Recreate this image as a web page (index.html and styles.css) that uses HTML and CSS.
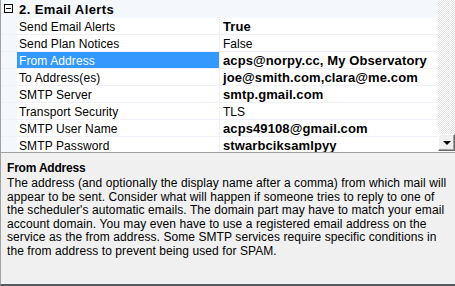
FILE: index.html
```html
<!DOCTYPE html>
<html>
<head>
<meta charset="utf-8">
<link rel="stylesheet" href="styles.css">
</head>
<body>
<div class="app">
  <div class="grid">
    <div class="rows">
      <div class="cat">
        <div class="margin"><span class="expander"><span class="minus"></span></span></div>
        <div class="cat-label">2. Email Alerts</div>
      </div>
      <div class="row"><div class="margin"></div><div class="name">Send Email Alerts</div><div class="val bold">True</div></div>
      <div class="row"><div class="margin"></div><div class="name">Send Plan Notices</div><div class="val">False</div></div>
      <div class="row sel"><div class="margin"></div><div class="name">From Address</div><div class="val bold">acps@norpy.cc, My Observatory</div></div>
      <div class="row"><div class="margin"></div><div class="name">To Address(es)</div><div class="val bold">joe@smith.com,clara@me.com</div></div>
      <div class="row"><div class="margin"></div><div class="name">SMTP Server</div><div class="val bold">smtp.gmail.com</div></div>
      <div class="row"><div class="margin"></div><div class="name">Transport Security</div><div class="val">TLS</div></div>
      <div class="row"><div class="margin"></div><div class="name">SMTP User Name</div><div class="val bold">acps49108@gmail.com</div></div>
      <div class="row"><div class="margin"></div><div class="name">SMTP Password</div><div class="val bold">stwarbciksamlpyy</div></div>
    </div>
    <div class="scroll">
      <div class="track"></div>
      <div class="btn"><span class="arrow"></span></div>
    </div>
  </div>
  <div class="desc">
    <div class="desc-title">From Address</div>
    <div class="desc-text">The address (and optionally the display name after a comma) from which mail will<br>appear to be sent. Consider what will happen if someone tries to reply to one of<br>the scheduler's automatic emails. The domain part may have to match your email<br>account domain. You may even have to use a registered email address on the<br>service as the from address. Some SMTP services require specific conditions in<br>the from address to prevent being used for SPAM.</div>
  </div>
</div>
</body>
</html>
```
FILE: styles.css
```css
html, body { margin: 0; padding: 0; }
body {
  width: 455px; height: 286px; overflow: hidden;
  font-family: "Liberation Sans", Arial, sans-serif;
  font-size: 12px; color: #000; background: #f0f0f0;
}
.app { display: flex; flex-direction: column; height: 286px; }
.grid {
  height: 153px; display: flex; background: #fff;
  border-bottom: 1px solid #a0a0a0; box-sizing: border-box;
  flex: none;
}
.rows { width: 438px; overflow: hidden; border-left: 1px solid #a0a0a0; box-sizing: border-box; }
.cat {
  height: 17px; display: flex; background: #f4f7fc;
  border-bottom: 1px solid #f4f7fc;
}
.margin { width: 16px; flex: none; background: #f4f7fc; position: relative; }
.expander {
  position: absolute; left: 3px; top: 4px; width: 9px; height: 9px;
  box-sizing: border-box; border: 1px solid #000; background: #fff;
}
.minus { position: absolute; left: 1px; top: 3px; width: 5px; height: 1px; background: #000; }
.cat-label { font-weight: bold; font-size: 13px; letter-spacing: 0.4px; line-height: 17px; padding-left: 2px; padding-top: 1px; }
.row { height: 16px; display: flex; border-bottom: 1px solid #f0f0fa; }
.name {
  width: 203px; flex: none; line-height: 16px; padding: 1px 0 0 2px; box-sizing: border-box;
  border-right: 1px solid #f0f0fa; white-space: nowrap; color: #000; letter-spacing: 0.1px;
}
.row.sel .name { background: #3399ff; color: #fff; }
.val { padding: 1px 0 0 3px; line-height: 16px; white-space: nowrap; }
.bold { font-weight: bold; font-size: 13px; letter-spacing: 0.1px; }
.scroll { width: 17px; display: flex; flex-direction: column; }
.track {
  flex: 1;
  background: repeating-conic-gradient(#e3e3e3 0 25%, #fff 0 50%) 0 0 / 2px 2px;
}
.btn {
  height: 17px; box-sizing: border-box; background: #f0f0f0; flex: none; margin-bottom: 1px;
  border-top: 1px solid #fff; border-left: 1px solid #fff;
  border-right: 1px solid #696969; border-bottom: 1px solid #696969;
  box-shadow: inset -1px -1px 0 #a0a0a0;
  display: flex; align-items: center; justify-content: center;
}
.arrow {
  width: 0; height: 0; border-left: 4px solid transparent; border-right: 4px solid transparent;
  border-top: 4px solid #000; margin-top: 1px;
}
.desc {
  flex: 1; border-left: 1px solid #a0a0a0;
  border-bottom: 2px solid #505a60;
  padding: 8px 2px 0 6px; white-space: nowrap;
}
.desc-title { font-weight: bold; font-size: 12px; letter-spacing: -0.2px; line-height: 14px; margin-bottom: 2px; }
.desc-text { line-height: 13.5px; letter-spacing: 0.08px; }
```
